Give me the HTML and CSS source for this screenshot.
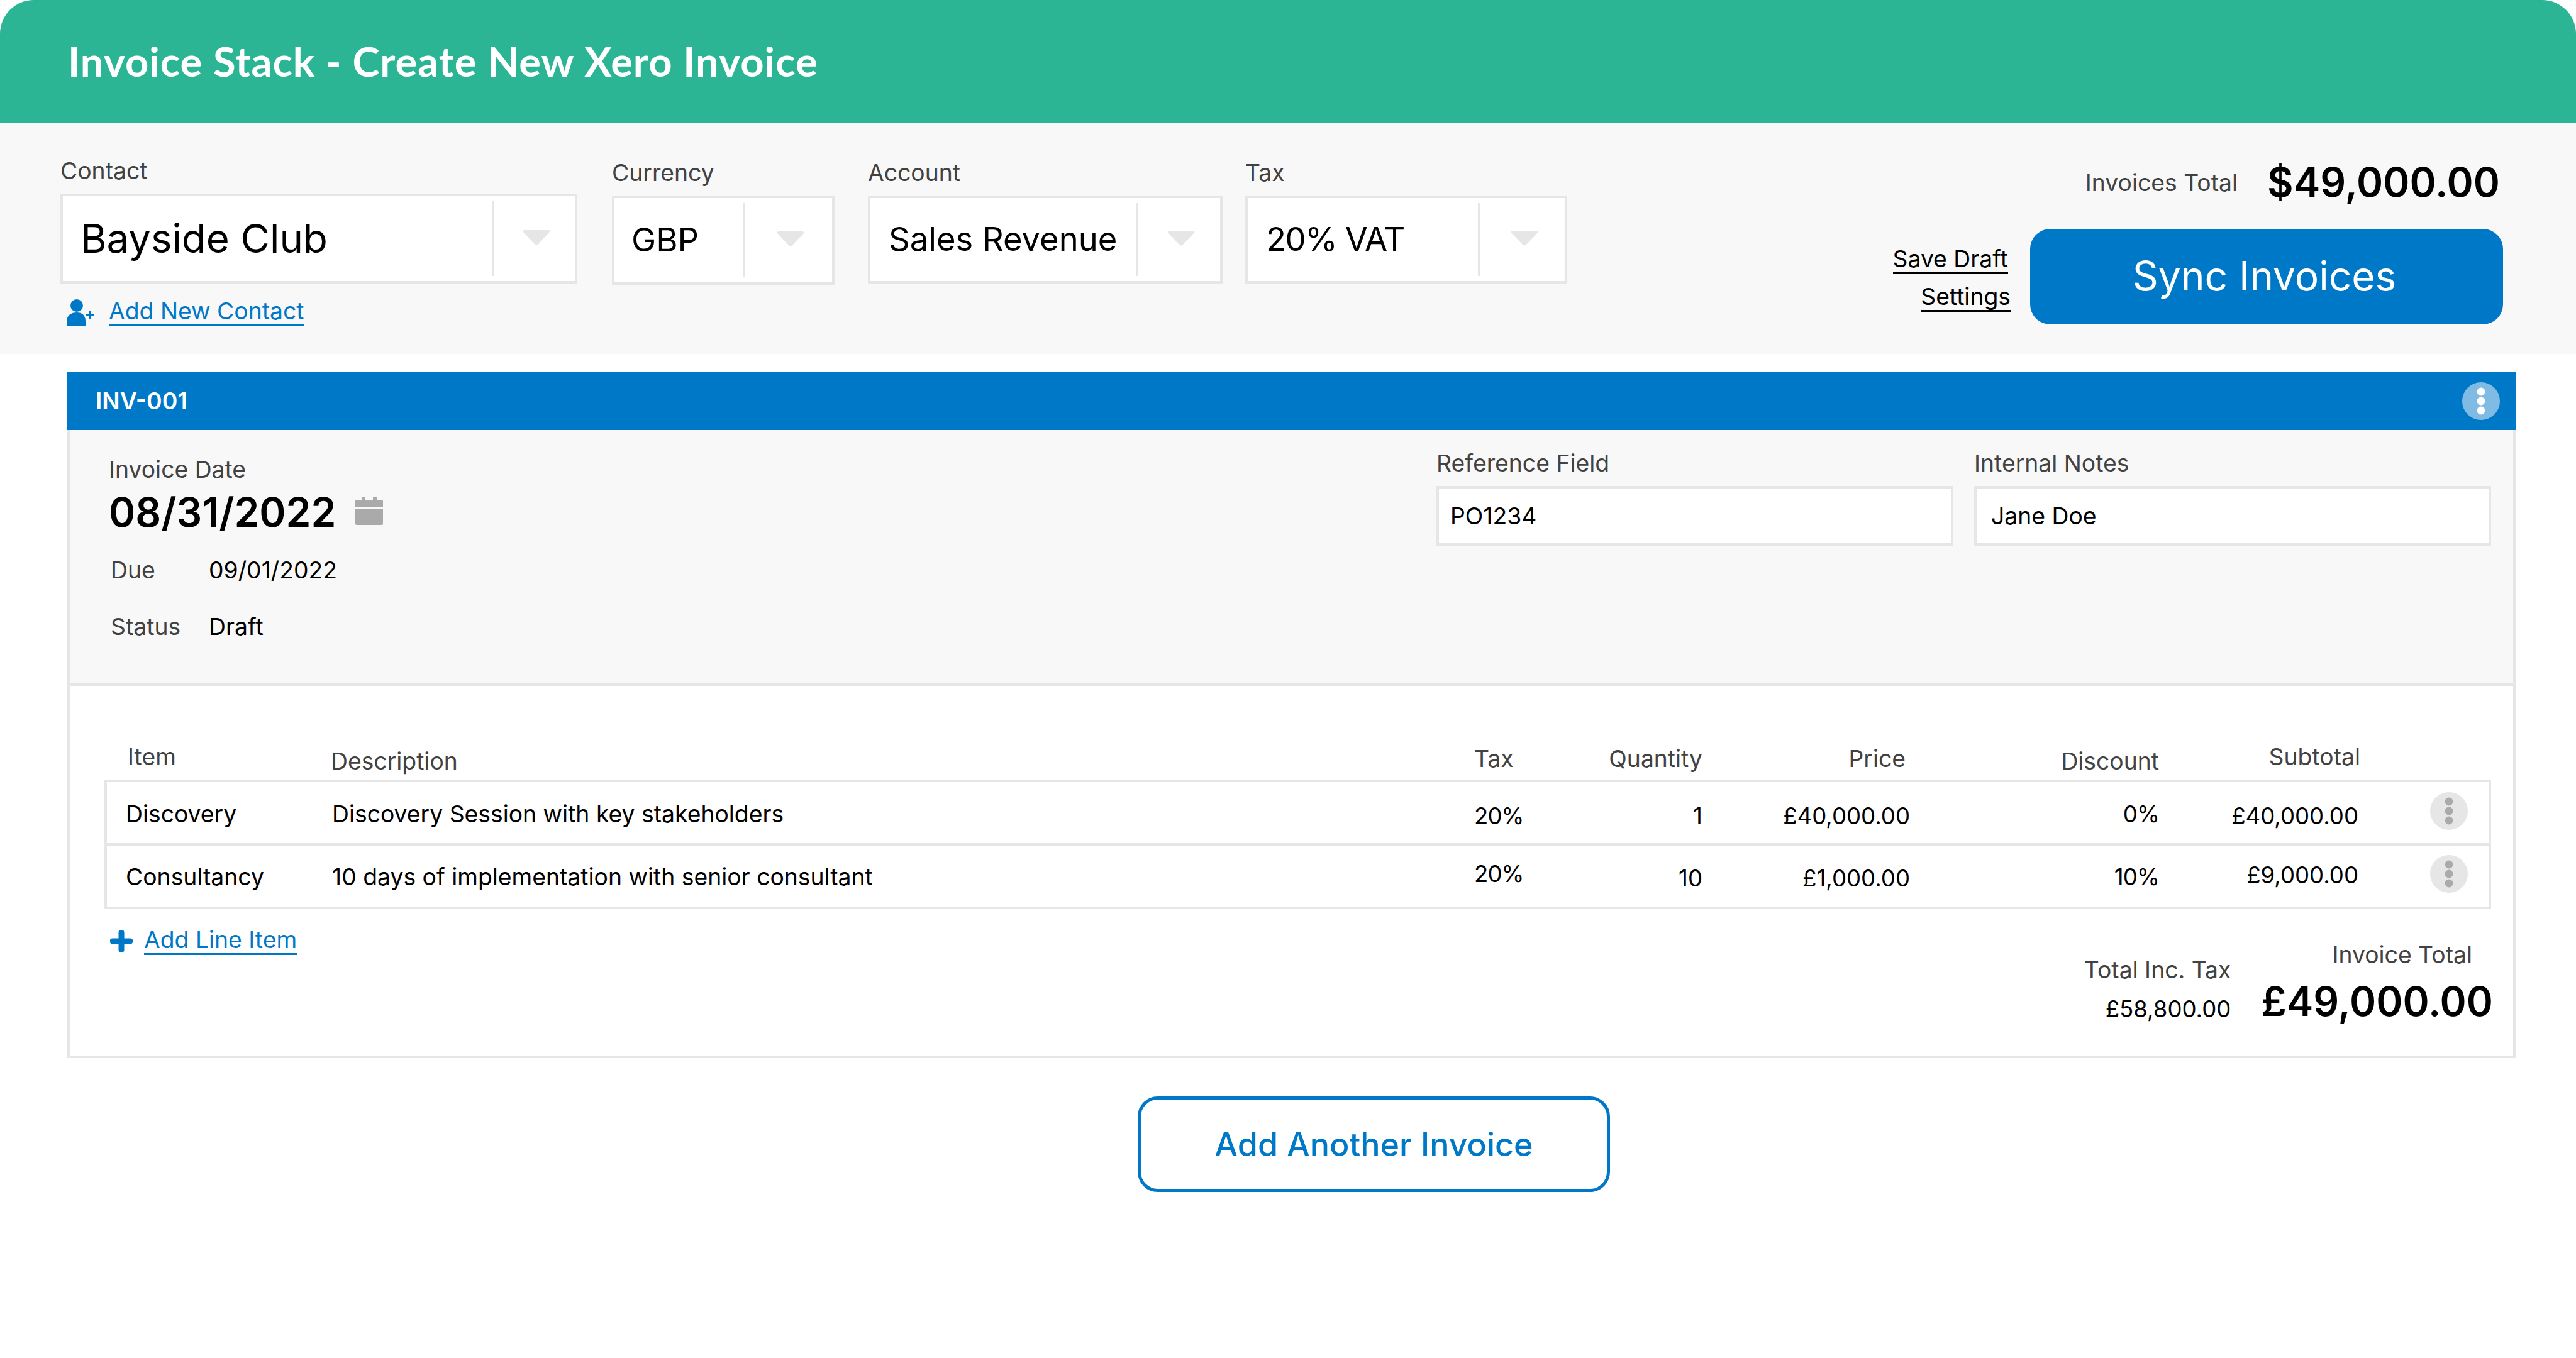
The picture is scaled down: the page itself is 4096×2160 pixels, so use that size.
FILE: index.html
```html
<!DOCTYPE html>
<html lang="en">
<head>
<meta charset="utf-8">
<title>Invoice Stack</title>
<link rel="stylesheet" href="styles.css">
</head>
<body>
<header class="top"><h1 class="title">Invoice Stack - Create New Xero Invoice</h1></header>

<section class="bar">
  <div class="field f-contact">
    <label class="lab">Contact</label>
    <div class="sel s-contact">
      <span class="val v-big">Bayside Club</span>
      <span class="btn b-contact"><svg class="tri" viewBox="0 0 44 24"><path d="M3 0H41Q44 0 43 3L25 22Q22 25 19 22L1 3Q0 0 3 0Z"/></svg></span>
    </div>
    <a class="add add-contact">
      <svg class="ic-user" viewBox="0 0 44 44"><circle cx="16" cy="11" r="10"/><path d="M0 44V36C0 27 7 22 16 22C25 22 30 27 30 36V44Z"/><path d="M37 19V33M30 26H44" class="ic-plus"/></svg>
      <span class="link">Add New Contact</span>
    </a>
  </div>
  <div class="field f-cur">
    <label class="lab">Currency</label>
    <div class="sel s-cur"><span class="val v-cur">GBP</span><span class="btn b-cur"><svg class="tri" viewBox="0 0 44 24"><path d="M3 0H41Q44 0 43 3L25 22Q22 25 19 22L1 3Q0 0 3 0Z"/></svg></span></div>
  </div>
  <div class="field f-acc">
    <label class="lab">Account</label>
    <div class="sel s-acc"><span class="val">Sales Revenue</span><span class="btn b-acc"><svg class="tri" viewBox="0 0 44 24"><path d="M3 0H41Q44 0 43 3L25 22Q22 25 19 22L1 3Q0 0 3 0Z"/></svg></span></div>
  </div>
  <div class="field f-tax">
    <label class="lab">Tax</label>
    <div class="sel s-tax"><span class="val v-tax">20% VAT</span><span class="btn b-tax"><svg class="tri" viewBox="0 0 44 24"><path d="M3 0H41Q44 0 43 3L25 22Q22 25 19 22L1 3Q0 0 3 0Z"/></svg></span></div>
  </div>
  <div class="summary">
    <div class="sum-line"><span class="lab sum-lab">Invoices Total</span><strong class="big">$49,000.00</strong></div>
    <div class="sum-act">
      <div class="act-links"><a class="dark-link dl-save">Save Draft</a><a class="dark-link">Settings</a></div>
      <button class="sync">Sync Invoices</button>
    </div>
  </div>
</section>

<main class="card">
  <div class="card-head">
    <span class="inv">INV-001</span>
    <svg class="keb keb-blue" viewBox="0 0 60 60"><circle cx="30" cy="30" r="30"/><circle class="d" cx="30" cy="15" r="6.5"/><circle class="d" cx="30" cy="30" r="6.5"/><circle class="d" cx="30" cy="45" r="6.5"/></svg>
  </div>
  <div class="card-in">
    <section class="info">
      <div class="meta">
        <div class="lab">Invoice Date</div>
        <div class="date-line"><strong class="big">08/31/2022</strong>
          <svg class="cal" viewBox="0 0 44 44"><path d="M10 0h6v5h-6zM28 0h6v5h-6z"/><path d="M2 4H42Q44 4 44 6V15H0V6Q0 4 2 4Z"/><path d="M0 19H44V42Q44 44 42 44H2Q0 44 0 42Z"/></svg>
        </div>
        <div class="kv kv-due"><span class="lab k">Due</span><span class="v">09/01/2022</span></div>
        <div class="kv kv-status"><span class="lab k">Status</span><span class="v">Draft</span></div>
      </div>
      <div class="inputs">
        <div class="inp-col"><div class="lab">Reference Field</div><div class="inp i-ref">PO1234</div></div>
        <div class="inp-col"><div class="lab">Internal Notes</div><div class="inp">Jane Doe</div></div>
      </div>
    </section>

    <section class="lines">
      <div class="grid thead">
        <span class="lab th-item">Item</span>
        <span class="lab th-desc">Description</span>
        <span class="lab th-mid">Tax</span>
        <span class="lab th-mid r">Quantity</span>
        <span class="lab th-mid r th-price">Price</span>
        <span class="lab r">Discount</span>
        <span class="lab r th-item th-sub">Subtotal</span>
      </div>
      <div class="tbl">
        <div class="grid row row-first">
          <span class="n28">Discovery</span>
          <span class="n28">Discovery Session with key stakeholders</span>
          <span class="n31 pct">20%</span>
          <span class="n31 r num">1</span>
          <span class="n31 r num">£40,000.00</span>
          <span class="n28 r pct">0%</span>
          <span class="n31 r num">£40,000.00</span>
          <svg class="keb keb-gray k1" viewBox="0 0 60 60"><circle cx="30" cy="30" r="30"/><circle class="d" cx="30" cy="15" r="6.5"/><circle class="d" cx="30" cy="30" r="6.5"/><circle class="d" cx="30" cy="45" r="6.5"/></svg>
        </div>
        <div class="grid row">
          <span class="n27">Consultancy</span>
          <span class="n27">10 days of implementation with senior consultant</span>
          <span class="n22 pct">20%</span>
          <span class="n29 r num">10</span>
          <span class="n29 r num">£1,000.00</span>
          <span class="n27 r pct">10%</span>
          <span class="n24 r num">£9,000.00</span>
          <svg class="keb keb-gray k2" viewBox="0 0 60 60"><circle cx="30" cy="30" r="30"/><circle class="d" cx="30" cy="15" r="6.5"/><circle class="d" cx="30" cy="30" r="6.5"/><circle class="d" cx="30" cy="45" r="6.5"/></svg>
        </div>
      </div>
      <div class="foot">
        <a class="add add-line">
          <svg class="ic-add" viewBox="0 0 36 36"><path d="M18 4V32M4 18H32"/></svg>
          <span class="link">Add Line Item</span>
        </a>
        <div class="tot-tax"><div class="lab">Total Inc. Tax</div><div class="tot-tax-v num">£58,800.00</div></div>
        <div class="tot-inv"><div class="lab tot-inv-l">Invoice Total</div><strong class="big tot-inv-v">£49,000.00</strong></div>
      </div>
    </section>
  </div>
</main>

<button class="another">Add Another Invoice</button>
</body>
</html>
```
FILE: styles.css
```css
* { box-sizing: border-box; }
html, body { margin: 0; padding: 0; background: #fff; }
body { width: 4096px; height: 2160px; overflow: hidden; font-family: "Inter", "Liberation Sans", sans-serif; font-size: 37.3px; line-height: 46px; color: #000; }

.top { height: 196px; background: #2bb594; border-radius: 54px 54px 0 0; display: flex; align-items: center; padding: 0 0 2px 108px; }
.title { margin: 0; font-family: "Lato", sans-serif; font-weight: 700; font-size: 65px; line-height: 80px; color: #fff; letter-spacing: 1px; }

.bar { height: 367px; background: #f8f8f8; display: flex; align-items: flex-start; padding: 53px 116px 0 96px; }
.lab { color: #424242; font-size: 37.3px; line-height: 46px; display: block; }
.field { display: flex; flex-direction: column; }
.f-cur { margin: 3px 0 0 55px; }
.f-acc { margin: 3px 0 0 53px; }
.f-tax { margin: 3px 0 0 36px; }

.sel { margin-top: 13px; background: #fff; border: 4px solid #e6e6e6; display: flex; height: 140px; font-size: 52.5px; line-height: 66px; }
.s-contact { width: 822px; height: 143px; }
.s-cur { width: 354px; height: 142px; }
.s-acc { width: 564px; }
.s-tax { width: 512px; }
.val { flex: 1; display: flex; align-items: center; padding-left: 29px; padding-bottom: 2px; white-space: nowrap; }
.v-big { font-size: 63.5px; padding-left: 28px; }
.v-cur { padding-left: 27px; }
.v-tax { letter-spacing: -1.4px; }
.btn { margin: 8px 0; border-left: 4px solid #e6e6e6; display: flex; align-items: center; justify-content: center; padding-left: 6px; padding-bottom: 4px; }
.b-contact { width: 132px; }
.b-cur { width: 142px; }
.b-acc { width: 134px; }
.b-tax { width: 138px; }
.tri { width: 44px; height: 24px; fill: #e6e6e6; }

.add { display: flex; align-items: center; color: #0078c8; }
.add-contact { margin: 23px 0 0 10px; gap: 23px; }
.ic-user { width: 44px; height: 44px; fill: #0078c8; }
.ic-plus { fill: none; stroke: #0078c8; stroke-width: 4; }
.link { color: #0078c8; border-bottom: 3px solid #0078c8; line-height: 42px; }

.summary { margin-left: auto; display: flex; flex-direction: column; align-items: flex-end; }
.sum-line { display: flex; align-items: center; gap: 47px; padding-right: 5px; height: 76px; margin-top: 3px; }
.big { font-size: 64px; line-height: 76px; font-weight: 600; letter-spacing: 0; }
.sum-act { display: flex; align-items: stretch; margin-top: 36px; }
.sum-lab { margin-top: 2px; }
.act-links { display: flex; flex-direction: column; align-items: flex-end; margin: 27px 31px 0 0; }
.dark-link { color: #000; border-bottom: 3px solid #000; line-height: 42px; margin-top: 15px; }
.dark-link:first-child { margin-top: 0; }
.dl-save { margin-right: 4px; }
.sync { width: 752px; height: 152px; padding: 0 7px 4px 0; background: #0078c8; color: #fff; border: 0; border-radius: 32px; font-family: inherit; font-size: 64px; font-weight: 400; }

.card { margin: 29px 96px 0 107px; }
.card-head { height: 92px; background: #0078c8; display: flex; align-items: center; justify-content: space-between; padding: 0 25px 0 45px; }
.inv { color: #fff; font-weight: 600; font-size: 37.3px; }
.keb { width: 60px; height: 60px; display: block; }
.keb-blue { fill: #80bbe3; }
.keb-blue .d { fill: #fff; }
.keb-gray { fill: #e6e6e6; margin-left: 114px; }
.keb-gray .d { fill: #aaa; }
.k1 { margin-top: 16px; }
.k2 { margin-top: 15px; }

.card-in { border: 4px solid #e6e6e6; border-top: 0; }
.info { height: 407px; background: #f8f8f8; border-bottom: 4px solid #e6e6e6; display: flex; justify-content: space-between; padding: 40px 35px 0 62px; }
.date-line { display: flex; align-items: flex-start; gap: 31px; margin-top: 7px; }
.cal { width: 44px; height: 44px; fill: #aaa; margin-top: 14px; }
.kv { display: flex; margin-left: 3px; }
.kv-due { margin-top: 31px; }
.kv-status { margin-top: 44px; }
.k { width: 156px; }
.inputs { display: flex; gap: 33px; margin-top: -10px; }
.inp-col { width: 822px; }
.inp { margin-top: 13px; height: 95px; background: #fff; border: 4px solid #e6e6e6; display: flex; align-items: center; padding-left: 23px; }
.i-ref { padding-left: 18px; }

.lines { padding: 90px 35px 0 55px; }
.grid { display: grid; grid-template-columns: 328px 1816px 136px 227px 330px 396px 317px 1fr; padding-left: 30px; }
.r { text-align: right; }
.thead { align-items: end; padding-bottom: 6px; border-left: 4px solid transparent; }
.th-item { margin: 0 0 7px 3px; }
.th-desc { margin-left: -2px; }
.th-mid { margin-bottom: 4px; }
.th-price { margin-right: 7px; }
.th-sub { margin: 0 -3px 7px 0; }
.tbl { border: 4px solid #e6e6e6; }
.row { height: 97px; align-items: start; white-space: nowrap; }
.row-first { border-bottom: 4px solid #e6e6e6; box-sizing: content-box; }
.num { font-size: 36.6px; }
.pct { font-size: 36.6px; letter-spacing: -0.9px; }
.n22 { margin-top: 22px; }
.n24 { margin-top: 24px; }
.n27 { margin-top: 27px; }
.n28 { margin-top: 28px; }
.n29 { margin-top: 29px; }
.n31 { margin-top: 31px; }

.foot { height: 233px; display: flex; align-items: flex-start; }
.add-line { margin: 28px 0 0 9px; gap: 18px; }
.ic-add { width: 36px; height: 36px; fill: none; stroke: #0078c8; stroke-width: 9; stroke-linecap: round; }
.tot-tax { margin: 74px 0 0 auto; text-align: right; }
.tot-tax-v { margin-top: 16px; }
.tot-inv { margin: 50px -3px 0 48px; text-align: right; }
.tot-inv-l { margin-right: 33px; }
.tot-inv-v { display: block; line-height: 80px; margin-top: 11px; }

.another { display: block; margin: 61px 0 0 1809px; width: 751px; height: 152px; background: #fff; border: 5px solid #0078c8; border-radius: 32px; color: #0078c8; font-family: inherit; font-size: 52px; font-weight: 500; }
```
